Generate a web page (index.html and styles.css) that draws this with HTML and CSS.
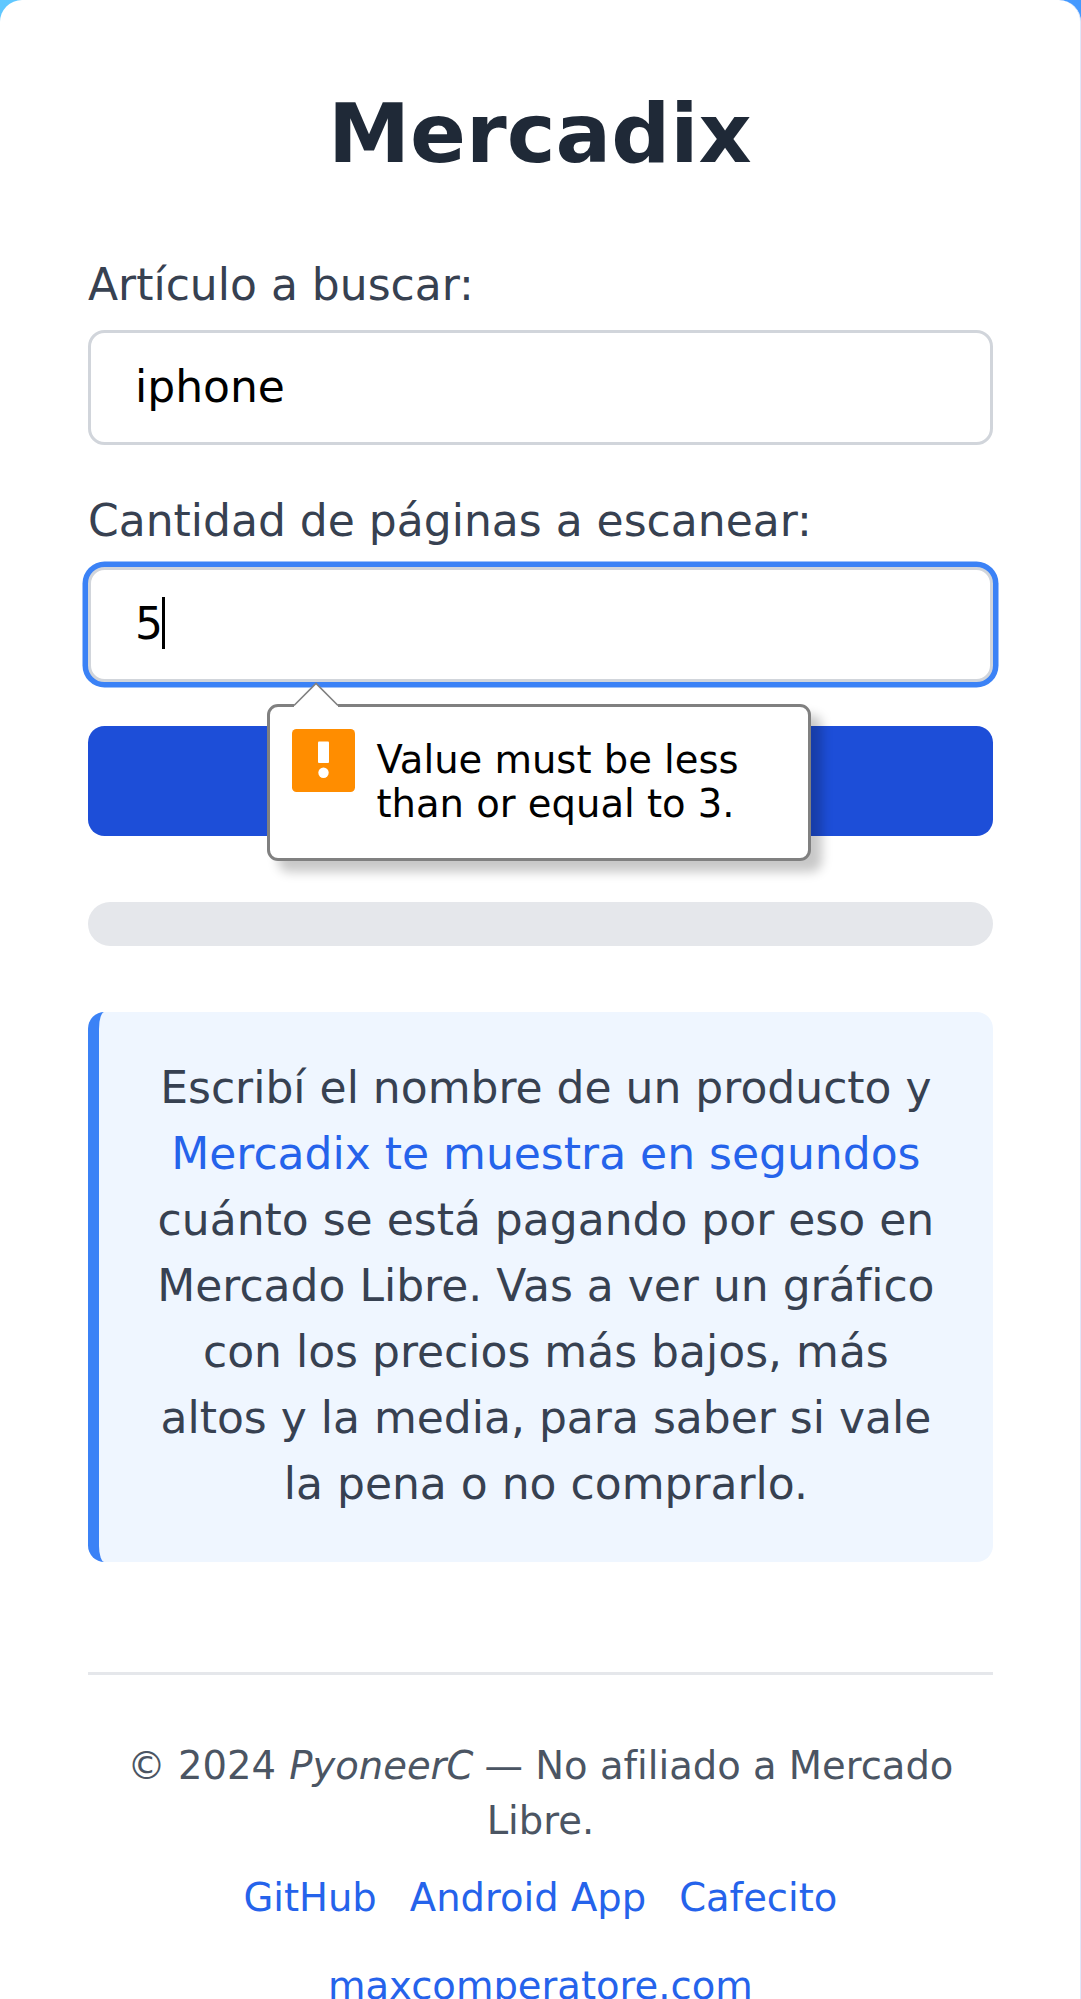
FILE: index.html
```html
<!DOCTYPE html>
<html lang="es">
<head>
<meta charset="utf-8">
<title>Mercadix</title>
<link rel="stylesheet" href="styles.css">
</head>
<body>
<main class="card">
  <h1 class="title">Mercadix</h1>
  <form class="form" novalidate>
    <div class="field">
      <label class="label" for="item">Artículo a buscar:</label>
      <input class="input" id="item" type="text" value="iphone">
    </div>
    <div class="field field-active">
      <label class="label" for="pages">Cantidad de páginas a escanear:</label>
      <div class="control">
        <input class="input input-active" id="pages" type="text" value="5">
        <span class="caret"></span>
        <div class="bubble" role="alert">
          <svg class="bubble-arrow" width="46" height="25" viewBox="0 0 46 25">
            <path d="M1 23 L23 1.5 L45 23 V25 H1Z" fill="#fff"/>
            <path d="M1 23.5 L23 1.5 L45 23.5" fill="none" stroke="#808080" stroke-width="1.6"/>
          </svg>
          <svg class="bubble-icon" width="63" height="63" viewBox="0 0 63 63">
            <rect width="63" height="63" rx="4.5" fill="#ff8d00"/>
            <rect x="26" y="12.5" width="11" height="21.5" rx="1" fill="#fff"/>
            <circle cx="31.5" cy="43.8" r="5.2" fill="#fff"/>
          </svg>
          <p class="bubble-text">Value must be less<br>than or equal to 3.</p>
        </div>
      </div>
    </div>
    <button class="submit" type="button" aria-label="Buscar"></button>
  </form>
  <div class="progress"></div>
  <p class="intro">Escribí el nombre de un producto y <span class="accent">Mercadix te muestra en segundos</span> cuánto se está pagando por eso en Mercado Libre. Vas a ver un gráfico con los precios más bajos, más altos y la media, para saber si vale la pena o no comprarlo.</p>
  <footer class="footer">
    <p class="copyright">© 2024 <em class="author">PyoneerC</em> — No afiliado a Mercado Libre.</p>
    <nav class="links">
      <a class="link">GitHub</a>
      <a class="link">Android App</a>
      <a class="link">Cafecito</a>
      <a class="link">maxcomperatore.com</a>
    </nav>
  </footer>
</main>
</body>
</html>
```

FILE: styles.css
```css
* {
  box-sizing: border-box;
  margin: 0;
  padding: 0;
}

html {
  height: 1999px;
  overflow: hidden;
}

body {
  height: 1999px;
  overflow: hidden;
  background: linear-gradient(90deg, #60c8ff, #4499ff);
  font-family: "DejaVu Sans", sans-serif;
  font-size: 44px;
  line-height: 66px;
  color: #374151;
}

.card {
  height: 1999px;
  padding: 84px 87.25px 0 88px;
  border-right: 1px solid #dfe8fb;
  border-radius: 22px 22px 0 0;
  background: #fff;
}

.title {
  margin: 0 1px 69px 0;
  font-size: 82.5px;
  line-height: 99px;
  text-align: center;
  color: #1f2937;
}

.form {
  display: flex;
  flex-direction: column;
  gap: 43px;
}

.field {
  display: flex;
  flex-direction: column;
  gap: 12px;
}

.field-active {
  gap: 12.6px;
}

.label {
  display: block;
}

.control {
  position: relative;
  display: flex;
}

.input {
  width: 100%;
  height: 115px;
  padding: 0 44px 2px;
  border: 3px solid #d1d5db;
  border-radius: 16.5px;
  background: #fff;
  font: inherit;
  color: #000;
  outline: none;
}

.input-active {
  box-shadow: 0 0 0 5.5px #3b82f6;
}

.caret {
  position: absolute;
  left: 74px;
  top: 30.4px;
  width: 3px;
  height: 52px;
  background: #000;
}

.bubble {
  position: absolute;
  z-index: 1;
  left: 179px;
  top: 137.4px;
  display: flex;
  gap: 22.5px;
  width: 544px;
  height: 157px;
  padding: 22px 21.5px;
  border: 3px solid #808080;
  border-radius: 11px;
  background: #fff;
  box-shadow: 11px 11px 11px rgba(0, 0, 0, 0.22);
}

.bubble-arrow {
  position: absolute;
  left: 23px;
  top: -25px;
}

.bubble-icon {
  flex: none;
}

.bubble-text {
  margin-left: -0.5px;
  padding-top: 9px;
  font-size: 38.5px;
  line-height: 44px;
  white-space: nowrap;
  color: #000;
}

.submit {
  height: 110px;
  margin-top: 1.4px;
  border: 0;
  border-radius: 16.5px;
  background: #1d4ed8;
}

.progress {
  height: 44px;
  margin: 66px 0;
  border-radius: 22px;
  background: #e5e7eb;
}

.intro {
  padding: 43px 44px 45px;
  border-left: 11px solid #3b82f6;
  border-radius: 16.5px;
  background: #eff6ff;
  text-align: center;
}

.accent {
  color: #2563eb;
}

.footer {
  margin-top: 110px;
  padding-top: 63px;
  border-top: 3px solid #e5e7eb;
  font-size: 38.5px;
  line-height: 55px;
  text-align: center;
  color: #4b5563;
}

.author {
  margin: 0 -1px 0 1px;
}

.links {
  display: flex;
  flex-wrap: wrap;
  justify-content: center;
  gap: 33px;
  margin-top: 22px;
}

.link {
  color: #2563eb;
}
```
